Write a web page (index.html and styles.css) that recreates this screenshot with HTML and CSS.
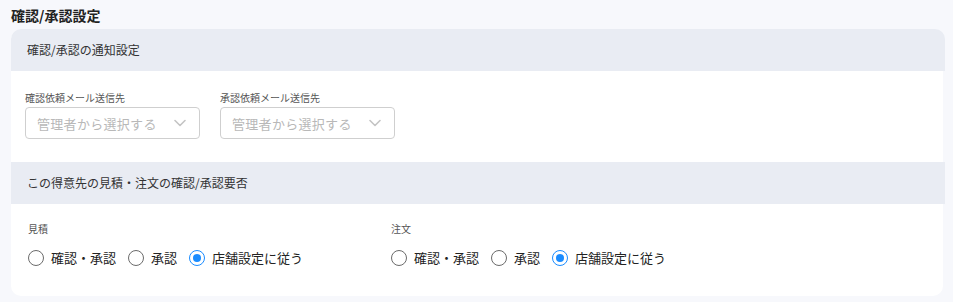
FILE: index.html
```html
<!DOCTYPE html>
<html>
<head>
	<title>確認/承認設定</title>
	<link rel="stylesheet" href="styles.css">
</head>
<body>
<div class="page">
	<h2 class="page-title">確認/承認設定</h2>

	<div class="card">
		<div class="card-head">確認/承認の通知設定</div>
		<div class="card-body mail">
			<div class="field">
				<div class="field-label">確認依頼メール送信先</div>
				<div class="select">
					<span class="placeholder">管理者から選択する</span>
					<svg class="chevron" width="12" height="8" viewBox="0 0 12 8"><path d="M1 1.5 L6 6.5 L11 1.5" fill="none" stroke="#c4c4c4" stroke-width="1.6" stroke-linecap="round" stroke-linejoin="round"/></svg>
				</div>
			</div>
			<div class="field">
				<div class="field-label">承認依頼メール送信先</div>
				<div class="select">
					<span class="placeholder">管理者から選択する</span>
					<svg class="chevron" width="12" height="8" viewBox="0 0 12 8"><path d="M1 1.5 L6 6.5 L11 1.5" fill="none" stroke="#c4c4c4" stroke-width="1.6" stroke-linecap="round" stroke-linejoin="round"/></svg>
				</div>
			</div>
		</div>

		<div class="card-head">この得意先の見積・注文の確認/承認要否</div>
		<div class="card-body need">
			<div class="col">
				<div class="field-label">見積</div>
				<div class="radios">
					<label class="radio"><span class="dot"></span>確認・承認</label>
					<label class="radio"><span class="dot"></span>承認</label>
					<label class="radio on"><span class="dot"></span>店舗設定に従う</label>
				</div>
			</div>
			<div class="col">
				<div class="field-label">注文</div>
				<div class="radios">
					<label class="radio"><span class="dot"></span>確認・承認</label>
					<label class="radio"><span class="dot"></span>承認</label>
					<label class="radio on"><span class="dot"></span>店舗設定に従う</label>
				</div>
			</div>
		</div>
	</div>
</div>
</body>
</html>
```

FILE: styles.css
```css
*{
	padding: 0;
	margin: 0;
	box-sizing: border-box;
}
body{
	background: #f7f8fc;
	font-family: "Noto Sans CJK JP", "Noto Sans", sans-serif;
	color: #222;
}
.page{
	padding: 5px 10px 0 11px;
}
.page-title{
	font-size: 14px;
	font-weight: bold;
	line-height: 20px;
	color: #222;
	margin-bottom: 4px;
}
.card{
	background: #fff;
	border-radius: 10px;
	height: 267px;
}
.card-head{
	background: #e9ecf3;
	height: 42px;
	line-height: 42px;
	padding-left: 16px;
	font-size: 12px;
	color: #333;
	margin-right: -2px;
}
.card-head:first-child{
	border-radius: 10px 10px 0 0;
}
.card-body{
	display: flex;
}
.mail{
	height: 91px;
	padding: 20px 0 0 14px;
	gap: 20px;
}
.field-label{
	font-size: 10px;
	line-height: 14px;
	color: #555;
}
.select{
	margin-top: 2px;
	width: 175px;
	height: 32px;
	border: 1px solid #cfcfcf;
	border-radius: 4px;
	display: flex;
	align-items: center;
	justify-content: space-between;
	padding: 0 13px 0 11px;
}
.placeholder{
	font-size: 13px;
	letter-spacing: 0.3px;
	color: #b8b8b8;
}
.need{
	padding: 18px 0 0 17px;
}
.col{
	width: 363px;
}
.radios{
	display: flex;
	align-items: center;
	margin-top: 12px;
	gap: 12px;
}
.radio{
	display: flex;
	align-items: center;
	gap: 7px;
	font-size: 13px;
	line-height: 20px;
	color: #222;
}
.dot{
	width: 16px;
	height: 16px;
	border: 1px solid #6b6b6b;
	border-radius: 50%;
	display: flex;
	align-items: center;
	justify-content: center;
}
.radio.on .dot{
	border-color: #1a8cff;
}
.radio.on .dot::after{
	content: "";
	width: 8px;
	height: 8px;
	border-radius: 50%;
	background: #1a8cff;
}
```
